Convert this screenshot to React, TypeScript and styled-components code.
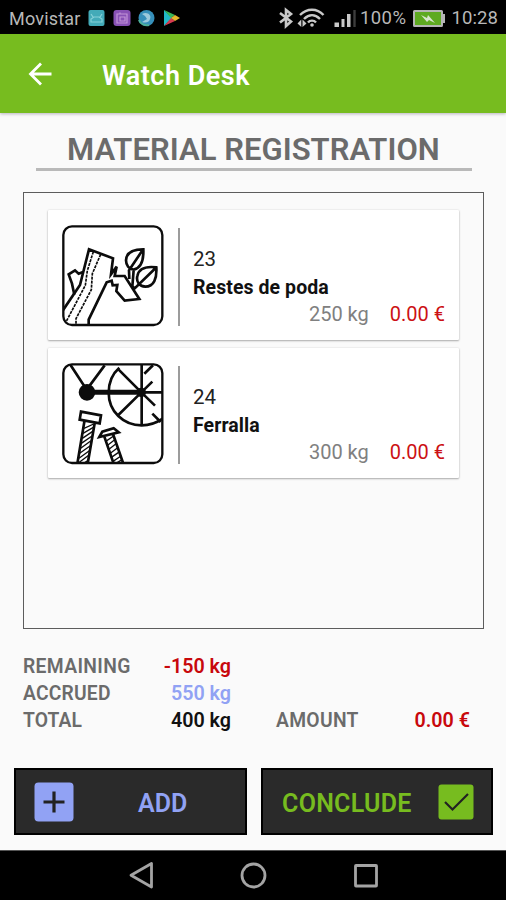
import React from "react";
import styled, { createGlobalStyle } from "styled-components";

const GlobalStyle = createGlobalStyle`
  * { box-sizing: border-box; }
  body { margin: 0; background: #fafafa; font-family: Roboto, sans-serif; }
`;

const Screen = styled.div`
  display: flex;
  flex-direction: column;
  width: 506px;
  height: 900px;
  overflow: hidden;
  background: #fafafa;
`;

const Label = styled.span<{ $size: number; $color: string; $weight?: number; $spacing?: number }>`
  font-size: ${(p) => p.$size}px;
  color: ${(p) => p.$color};
  font-weight: ${(p) => p.$weight ?? 400};
  letter-spacing: ${(p) => p.$spacing ?? 0}px;
  line-height: 27px;
  white-space: pre;
`;

const StatusBar = styled.header`
  display: flex;
  flex: none;
  align-items: center;
  justify-content: space-between;
  height: 34px;
  padding: 2px 8px 0 9px;
  background: #000;
`;

const StatusGroup = styled.div`
  display: flex;
  align-items: center;
`;

const Notifications = styled.svg`
  display: block;
  margin-left: 7px;
`;

const Indicators = styled.svg`
  display: block;
`;

const AppBar = styled.nav`
  display: flex;
  flex: none;
  align-items: center;
  height: 79px;
  padding: 3px 0 0 28px;
  gap: 50px;
  background: #77bc1f;
  box-shadow: 0 1px 3px rgba(60, 50, 80, 0.35);
`;

const ScreenTitle = styled.span`
  padding-top: 1px;
  color: #fff;
  font-size: 27px;
  font-weight: 600;
  line-height: 28px;
  letter-spacing: 0.5px;
`;

const BackIcon = styled.svg`
  display: block;
  width: 24px;
  height: 24px;
  margin-bottom: 2px;
`;

const Heading = styled.h1`
  flex: none;
  width: 436px;
  height: 37px;
  margin: 21px 0 0 36px;
  padding-left: 31px;
  border-bottom: 3px solid #b9b9b9;
  color: #6b6b6b;
  font-size: 31px;
  font-weight: 600;
  line-height: 32px;
  letter-spacing: 0.05px;
  white-space: nowrap;
`;

const ListBox = styled.main`
  display: flex;
  flex: none;
  flex-direction: column;
  gap: 8px;
  width: 461px;
  height: 437px;
  margin: 21px 0 0 23px;
  padding: 17px 23px 0 24px;
  border: 1px solid #5c5c5c;
`;

const Card = styled.article`
  display: flex;
  flex: none;
  width: 411px;
  height: 130px;
  padding: 15px 14px 0 14px;
  background: #fff;
  border-radius: 1px;
  box-shadow: 0 1px 2px rgba(0, 0, 0, 0.3), 0 0 2px rgba(0, 0, 0, 0.12);
`;

const Pictogram = styled.svg`
  display: block;
  flex: none;
  width: 102px;
  height: 102px;
`;

const Divider = styled.div`
  flex: none;
  width: 2px;
  height: 98px;
  margin: 3px 13px 0 14px;
  background: #9c9c9c;
`;

const CardText = styled.div`
  display: flex;
  flex: 1;
  flex-direction: column;
  padding-top: 21px;
`;

const CardName = styled.div`
  height: 28px;
  padding-top: 1px;
`;

const Amounts = styled.div`
  display: flex;
  justify-content: flex-end;
  gap: 21px;
`;

const Totals = styled.section`
  display: grid;
  flex: none;
  grid-template-columns: 130px 78px 128px 111px;
  grid-auto-rows: 27px;
  height: 81px;
  margin: 24px 0 0 23px;
`;

const Cell = styled.div<{ $end?: boolean; $indent?: number }>`
  display: flex;
  justify-content: ${(p) => (p.$end ? "flex-end" : "flex-start")};
  padding-left: ${(p) => p.$indent ?? 0}px;
`;

const Actions = styled.footer`
  display: flex;
  flex: none;
  gap: 14px;
  height: 67px;
  margin: 34px 13px 0 14px;
`;

const ActionButton = styled.button<{ $pad: string; $gap: number; $width: number }>`
  display: flex;
  flex: none;
  align-items: center;
  width: ${(p) => p.$width}px;
  height: 67px;
  padding: ${(p) => p.$pad};
  gap: ${(p) => p.$gap}px;
  border: 2px solid #000;
  background: #2a2a2a;
  font-family: inherit;
`;

const ButtonText = styled.span<{ $color: string; $spacing: number }>`
  padding-top: 4px;
  color: ${(p) => p.$color};
  font-size: 25px;
  font-weight: 600;
  line-height: 28px;
  letter-spacing: ${(p) => p.$spacing}px;
`;

const ButtonIcon = styled.svg`
  display: block;
  flex: none;
`;

const NavBar = styled.div`
  display: flex;
  flex: none;
  align-items: center;
  height: 50px;
  margin-top: 15px;
  border-top: 1px solid #555;
  background: #000;
`;

const ClippedBox = ({ id, children }: { id: string; children: React.ReactNode }) => (
  <Pictogram viewBox="38 28 306 306" fill="none" stroke="#0c0c0c" strokeWidth="8">
    <clipPath id={id}>
      <rect x="42" y="32" width="297" height="297" rx="26" />
    </clipPath>
    <g clipPath={`url(#${id})`}>{children}</g>
    <rect x="42" y="32" width="297" height="296" rx="26" strokeWidth="7" />
  </Pictogram>
);

const PruningIcon = () => (
  <ClippedBox id="pruning">
    <path d="M40 285 L92 208 L101 172 L119 101 L191 128 L185 176 L202 153 L196 181 H226 L270 250 L226 255 L201 226 L204 208 L190 209 L187 195 L172 200 L118 312 V334" />
    <path d="M75 237 L68 204 L58 176 L77 164 L88 174 L99 170" />
    <path d="M132 108 L114 165 L108 209 L43 332" strokeWidth="5" strokeDasharray="9 3" />
    <path d="M154 116 L129 174 L126 222 L80 309 V332" strokeWidth="5" strokeDasharray="9 3" />
    <path d="M282 101 C250 101 231 111 230 134 C230 149 239 161 253 162 C276 157 283 129 282 101 Z M280 103 L239 164 L240 190 M321 155 C288 151 268 160 264 181 C260 198 270 212 288 213 C314 213 323 188 321 155 Z M319 157 L256 218 L244 206 M253 163 L249 213" />
  </ClippedBox>
);

const ScrapIcon = () => (
  <ClippedBox id="scrap">
    <path d="M63 33 L112 108 L166 35" />
    <circle cx="113" cy="116" r="21" fill="#0c0c0c" />
    <path d="M113 116 H276" strokeWidth="15" />
    <path d="M210 42 C186 63 178 88 178 117 C178 173 222 215 277 215 C300 215 322 208 340 195" />
    <circle cx="276" cy="116" r="10" fill="#0c0c0c" />
    <path d="M277 33 V214 M276 116 H340 M276 116 L208 48 M276 116 L207 184 M276 116 L309 84 M285 60 L311 35 M276 116 L317 156 M309 180 L334 205" />
    <path d="M95 174 L155 185 L151 209 L91 198 Z M105 204 L84 330 M136 209 L115 330" />
    <path d="M150 250 L159 234 L193 224 L208 236 L150 250 Z M165 249 L193 330 M191 241 L222 330" />
    <path d="M104 224 L133 211 M101 239 L132 221 M99 254 L130 233 M96 269 L128 247 M94 284 L125 261 M91 299 L123 276 M89 314 L120 291 M87 328 L118 305 M98 332 L118 319 M168 264 L193 247 M173 276 L198 257 M177 288 L202 269 M181 300 L207 281 M185 312 L211 294 M190 324 L215 307 M200 329 L218 318" strokeWidth="4" />
  </ClippedBox>
);

const items = [
  { code: "23", name: "Restes de poda", weight: "250 kg", price: "0.00 €", Icon: PruningIcon },
  { code: "24", name: "Ferralla", weight: "300 kg", price: "0.00 €", Icon: ScrapIcon },
];

const totals = [
  { label: "REMAINING", value: "-150 kg", color: "#c8080c", spacing: 0.35 },
  { label: "ACCRUED", value: "550 kg", color: "#91a2f4", spacing: 0.2 },
  { label: "TOTAL", value: "400 kg", color: "#111", spacing: 0.1 },
];

export default function App() {
  return (
    <>
      <GlobalStyle />
      <Screen>
        <StatusBar>
          <StatusGroup>
            <Label $size={18} $color="#b8b8b8" $spacing={0.2}>Movistar</Label>
            <Notifications width="94" height="18" viewBox="0 0 94 18">
              <rect x="0.5" y="1" width="16" height="16" rx="2" fill="#43aab8" />
              <path d="M3 5 L5 8 M14 5 L12 8 M3 13 V10 L6 8 H11 L14 10 V13 Z" fill="none" stroke="#86d0d8" strokeWidth="1.2" />
              <rect x="25.5" y="1" width="17" height="16" rx="3" fill="#8851b5" />
              <path d="M29 5 H39 V14 H29 Z M32 5 V3.5 M32 8 H37 V12 H32 Z" fill="none" stroke="#c294d8" strokeWidth="1.2" />
              <circle cx="58.5" cy="9" r="8" fill="#368fba" />
              <path d="M54 5 C59 2 64 6 62 10 C61 14 57 14 54 13 L59 10 L57 7 Z" fill="#9cc9dc" />
              <path d="M51 11 C52 15 57 17 61 16" fill="none" stroke="#4daf9b" strokeWidth="2" />
              <path d="M76 1 L84 9 L76 17 Z" fill="#20b9c8" />
              <path d="M76 1 L87 6 L83 9 Z" fill="#37b65b" />
              <path d="M76 17 L87 12 L83 9 Z" fill="#d63a50" />
              <path d="M87 6 L92 9 L87 12 L83 9 Z" fill="#e6b72c" />
            </Notifications>
          </StatusGroup>
          <StatusGroup>
            <Indicators width="82" height="22" viewBox="278 7 82 22" fill="none" stroke="#c9c9c9" strokeWidth="2.4">
              <path d="M280 13 L291 21.500 L286 26 V10 L291 14 L280 22.500" strokeWidth="2.600" />
              <path d="M300 15 C307 8 317 8 323.500 15 M304 19 C309 14 315 14 320 19 M308 22.500 C310 20 314 20 316 22.500" />
              <circle cx="312" cy="25" r="1.800" fill="#c9c9c9" stroke="none" />
              <path d="M297.500 23.500 L301.300 19.500 V27 Z M306.500 23.500 L302.500 19.500 V27 Z" fill="#c9c9c9" stroke="none" />
              <path d="M334.500 22.500 H339 V27 H334.500 Z M341.500 19 H344.500 V27 H341.500 Z M347 14 H350.500 V27 H347 Z" fill="#c9c9c9" stroke="none" />
              <path d="M354.500 10 V27" stroke="#3c3c3c" />
            </Indicators>
            <Label $size={18.5} $color="#b8b8b8" $spacing={0.45}>100%</Label>
            <Indicators width="45" height="18" viewBox="407 8 45 18">
              <path d="M442 13 H446 V22 H442 Z" fill="#b5b5b5" />
              <rect x="415" y="10" width="28" height="15" rx="0.500" fill="#5eaa20" stroke="#b5b5b5" strokeWidth="2" />
              <path d="M422 14 L428 17 L429 14 L436 22 L430 19 L428 21 Z" fill="#d8e6cf" />
            </Indicators>
            <Label $size={18.5} $color="#b8b8b8" $spacing={0.1}>10:28</Label>
          </StatusGroup>
        </StatusBar>
        <AppBar>
          <BackIcon viewBox="0 0 24 24" fill="none" stroke="#fff" strokeWidth="2.8">
            <path d="M23.500 12 H2.500 M13 1.500 L2.500 12 L13 22.500" />
          </BackIcon>
          <ScreenTitle>Watch Desk</ScreenTitle>
        </AppBar>
        <Heading>MATERIAL REGISTRATION</Heading>
        <ListBox>
          {items.map(({ code, name, weight, price, Icon }) => (
            <Card key={code}>
              <Icon />
              <Divider />
              <CardText>
                <Label $size={20.5} $color="#222">{code}</Label>
                <CardName>
                  <Label $size={19.5} $color="#111" $weight={700} $spacing={0.07}>{name}</Label>
                </CardName>
                <Amounts>
                  <Label $size={20} $color="#808080">{weight}</Label>
                  <Label $size={20} $color="#cc1114">{price}</Label>
                </Amounts>
              </CardText>
            </Card>
          ))}
        </ListBox>
        <Totals>
          {totals.map((row, i) => (
            <React.Fragment key={row.label}>
              <Cell><Label $size={19.3} $color="#6b6b6b" $weight={600} $spacing={row.spacing}>{row.label}</Label></Cell>
              <Cell $end><Label $size={19.7} $color={row.color} $weight={600}>{row.value}</Label></Cell>
              <Cell $indent={45}>
                {i === 2 && <Label $size={19.3} $color="#6b6b6b" $weight={600} $spacing={0.3}>AMOUNT</Label>}
              </Cell>
              <Cell $end>
                {i === 2 && <Label $size={19.7} $color="#c8080c" $weight={600}>0.00 €</Label>}
              </Cell>
            </React.Fragment>
          ))}
        </Totals>
        <Actions>
          <ActionButton $width={233} $pad="0 0 0 18px" $gap={64}>
            <ButtonIcon width="40" height="40" viewBox="0 0 40 40">
              <rect x="0.500" y="0.500" width="39" height="39" rx="4" fill="#91a2f4" />
              <path d="M9.500 20 H30.500 M20 9.500 V30.500" stroke="#222" strokeWidth="3.200" />
            </ButtonIcon>
            <ButtonText $color="#91a2f4" $spacing={0}>ADD</ButtonText>
          </ActionButton>
          <ActionButton $width={232} $pad="0 0 0 19px" $gap={26}>
            <ButtonText $color="#77bc1f" $spacing={0.28}>CONCLUDE</ButtonText>
            <ButtonIcon width="36" height="36" viewBox="0 0 36 36">
              <rect x="0.500" y="0.500" width="35" height="35" rx="3" fill="#77bc1f" />
              <path d="M7 18 L14.500 25.500 L30 10" fill="none" stroke="#222" strokeWidth="2.2" />
            </ButtonIcon>
          </ActionButton>
        </Actions>
        <NavBar>
          <svg width="506" height="49" viewBox="0 0 506 49" fill="none" stroke="#a4a4a4" strokeWidth="2.800">
            <path d="M151.500 12.500 V36 L131 24.300 Z" strokeLinejoin="round" />
            <circle cx="253.500" cy="24.500" r="11.500" />
            <rect x="355.500" y="14.500" width="21" height="20.500" rx="0.500" />
          </svg>
        </NavBar>
      </Screen>
    </>
  );
}
